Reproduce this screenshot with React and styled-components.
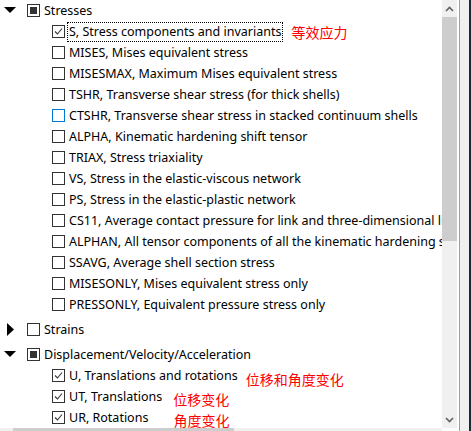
import React from "react";
import styled, { createGlobalStyle } from "styled-components";

const GlobalStyle = createGlobalStyle`
  html, body { margin: 0; padding: 0; background: #ffffff; }
  body { font-family: "Noto Sans", "Liberation Sans", sans-serif; }
`;

const Frame = styled.div`
  width: 471px;
  height: 431px;
  overflow: hidden;
  display: flex;
  background: #fff;
`;

const Main = styled.div`
  width: 442px;
  display: flex;
  flex-direction: column;
`;

const TreeArea = styled.div`
  height: 428px;
  overflow: hidden;
  display: flex;
  flex-direction: column;
  white-space: nowrap;
`;

const HScroll = styled.div`
  height: 3px;
  background: #f0f0f0;
  display: flex;
  padding-left: 13px;
`;

const HThumb = styled.div`
  width: 221px;
  background: #cdcdcd;
`;

const VScroll = styled.div`
  width: 15px;
  height: 428px;
  background: #f0f0f0;
  display: flex;
  flex-direction: column;
`;

const ArrowBtn = styled.div`
  height: 17px;
  display: flex;
  align-items: center;
  justify-content: center;
`;

const VThumb = styled.div`
  height: 224px;
  background: #cdcdcd;
`;

const VTrack = styled.div`
  flex: 1;
`;

const Edge = styled.div`
  display: flex;
  margin-left: 2px;
`;

const EdgeLine = styled.div`
  width: ${(p) => p.$w}px;
  background: ${(p) => p.$c};
`;

const Group = styled.div`
  display: flex;
  flex-direction: column;
  margin-top: ${(p) => (p.$first ? 0 : 4)}px;
`;

const Row = styled.div`
  height: 21px;
  display: flex;
  align-items: center;
  padding-left: ${(p) => (p.$child ? 52 : 0)}px;
`;

const Toggle = styled.div`
  width: 27px;
  height: 21px;
  display: flex;
  align-items: center;
  justify-content: center;
  padding-right: 7px;
  box-sizing: border-box;
`;

const Box = styled.div`
  width: 13px;
  height: 13px;
  box-sizing: border-box;
  border: 1px solid ${(p) => (p.$hover ? "#0078d7" : "#333333")};
  background: #fff;
  display: flex;
  align-items: center;
  justify-content: center;
  margin-top: -1px;
  flex-shrink: 0;
`;

const Partial = styled.div`
  width: 7px;
  height: 7px;
  background: #333333;
`;

const Label = styled.span`
  margin-left: 2px;
  padding: 1px 1px 2px;
  border: 1px dotted ${(p) => (p.$focus ? "#000" : "transparent")};
  font-size: 12.5px;
  line-height: 15px;
  color: #000;
`;

const Note = styled.span`
  font-family: "Noto Sans CJK SC", sans-serif;
  font-size: 14px;
  color: #ff0000;
  margin-left: ${(p) => p.$gap}px;
  position: relative;
  top: ${(p) => p.$dy}px;
`;

function Caret({ open }) {
  return open ? (
    <svg width="12" height="7" viewBox="0 0 12 7">
      <polygon points="0,0 12,0 6,6" fill="#000" />
    </svg>
  ) : (
    <svg width="7" height="13" viewBox="0 0 7 13">
      <polygon points="0,0 7,6.5 0,13" fill="#000" />
    </svg>
  );
}

function Check({ state, hover }) {
  return (
    <Box $hover={hover}>
      {state === "checked" && (
        <svg width="11" height="11" viewBox="0 0 11 11">
          <polyline points="2,5.5 4.5,8 9,2.5" fill="none" stroke="#333" strokeWidth="1.1" />
        </svg>
      )}
      {state === "partial" && <Partial />}
    </Box>
  );
}

const stresses = [
  { t: "S, Stress components and invariants", s: "checked", focus: true, note: "等效应力", gap: 8, dy: 0 },
  { t: "MISES, Mises equivalent stress" },
  { t: "MISESMAX, Maximum Mises equivalent stress" },
  { t: "TSHR, Transverse shear stress (for thick shells)" },
  { t: "CTSHR, Transverse shear stress in stacked continuum shells", hover: true },
  { t: "ALPHA, Kinematic hardening shift tensor" },
  { t: "TRIAX, Stress triaxiality" },
  { t: "VS, Stress in the elastic-viscous network" },
  { t: "PS, Stress in the elastic-plastic network" },
  { t: "CS11, Average contact pressure for link and three-dimensional line elements" },
  { t: "ALPHAN, All tensor components of all the kinematic hardening shift tensors" },
  { t: "SSAVG, Average shell section stress" },
  { t: "MISESONLY, Mises equivalent stress only" },
  { t: "PRESSONLY, Equivalent pressure stress only" },
];

const displacement = [
  { t: "U, Translations and rotations", s: "checked", note: "位移和角度变化", gap: 6, dy: 3 },
  { t: "UT, Translations", s: "checked", note: "位移变化", gap: 9, dy: 2 },
  { t: "UR, Rotations", s: "checked", note: "角度变化", gap: 23, dy: 2 },
];

const groups = [
  { name: "Stresses", open: true, s: "partial", items: stresses },
  { name: "Strains", open: false, s: "none", items: [] },
  { name: "Displacement/Velocity/Acceleration", open: true, s: "partial", items: displacement },
];

export default function App() {
  return (
    <>
      <GlobalStyle />
      <Frame>
        <Main>
          <TreeArea>
            {groups.map((g, gi) => (
              <Group key={g.name} $first={gi === 0}>
                <Row>
                  <Toggle>
                    <Caret open={g.open} />
                  </Toggle>
                  <Check state={g.s} />
                  <Label>{g.name}</Label>
                </Row>
                {g.open &&
                  g.items.map((it) => (
                    <Row key={it.t} $child>
                      <Check state={it.s} hover={it.hover} />
                      <Label $focus={it.focus}>{it.t}</Label>
                      {it.note && (
                        <Note $gap={it.gap} $dy={it.dy}>
                          {it.note}
                        </Note>
                      )}
                    </Row>
                  ))}
              </Group>
            ))}
          </TreeArea>
          <HScroll>
            <HThumb />
          </HScroll>
        </Main>
        <VScroll>
          <ArrowBtn>
            <svg width="9" height="6" viewBox="0 0 9 6">
              <polyline points="1,5 4.5,1.5 8,5" fill="none" stroke="#606060" strokeWidth="1.6" />
            </svg>
          </ArrowBtn>
          <VThumb />
          <VTrack />
          <ArrowBtn>
            <svg width="9" height="6" viewBox="0 0 9 6">
              <polyline points="1,1 4.5,4.5 8,1" fill="none" stroke="#606060" strokeWidth="1.6" />
            </svg>
          </ArrowBtn>
        </VScroll>
        <Edge>
          <EdgeLine $w={1} $c="#a0a0a0" />
          <EdgeLine $w={9} $c="#f0f0f0" />
          <EdgeLine $w={2} $c="#1e2834" />
        </Edge>
      </Frame>
    </>
  );
}
